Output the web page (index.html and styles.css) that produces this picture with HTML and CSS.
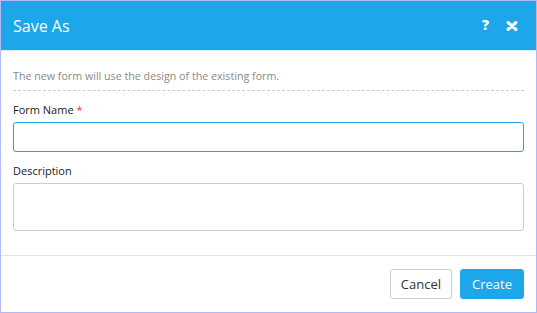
FILE: index.html
```html
<!DOCTYPE html>
<html lang="en">
<head>
  <meta charset="UTF-8" />
  <title>Save As</title>
  <link rel="stylesheet" href="styles.css">
</head>
<body>
  <div class="dialog">
    <header class="dlg-head">
      <h1>Save As</h1>
      <div class="dlg-tools">
        <span class="tool-help">?</span>
        <svg class="tool-close" width="12" height="10" viewBox="0 0 12 10">
          <path d="M2 1.5 L10 8.5 M10 1.5 L2 8.5" stroke="#fff" stroke-width="3" stroke-linecap="round"/>
        </svg>
      </div>
    </header>

    <section class="dlg-body">
      <p class="note">The new form will use the design of the existing form.</p>
      <div class="field">
        <label>Form Name <span class="req">*</span></label>
        <input type="text" class="inp inp-focus">
      </div>
      <div class="field">
        <label>Description</label>
        <textarea class="inp txt"></textarea>
      </div>
    </section>

    <footer class="dlg-foot">
      <button class="btn">Cancel</button>
      <button class="btn btn-primary">Create</button>
    </footer>
  </div>
</body>
</html>
```

FILE: styles.css
```css
:root{
  --blue:#1ea6ea;
  --text:#333333;
  --muted:#8a8a8a;
  --line:#cccccc;
}
*{box-sizing:border-box}
body{margin:0;font-family:'Open Sans',sans-serif;color:var(--text);background:#fff}
.dialog{width:537px;height:313px;border:1px solid #b1baf6;display:flex;flex-direction:column;background:#fff}
.dlg-head{height:50px;background:var(--blue);display:flex;align-items:center;justify-content:space-between;padding:0 12px 0 12px;border-bottom:1px solid #d6ecf9}
.dlg-head h1{margin:0;font-size:16px;font-weight:400;color:#fff}
.dlg-tools{display:flex;align-items:center;gap:17px;padding-right:6px}
.tool-help{color:#fff;font-weight:800;font-size:14px;line-height:1;margin-top:-2px}
.tool-close{display:block;margin-top:1px}
.dlg-body{padding:17px 12px 0 12px;flex:1}
.note{margin:0;padding-bottom:6px;font-size:10.7px;line-height:16px;color:var(--muted);border-bottom:1px dashed var(--line)}
.field{margin-top:11px;display:flex;flex-direction:column}
.field label{font-size:11px;line-height:15px;font-weight:500;color:#222;margin-bottom:5px}
.req{color:#e8412c}
.inp{display:block;width:100%;height:30px;border:1px solid var(--line);border-radius:3px;font-family:inherit;font-size:12px;padding:4px 8px;outline:none;background:#fff}
.inp-focus{border-color:var(--blue)}
.txt{height:48px;resize:none}
.dlg-foot{border-top:1px solid #e3e3e3;padding:13px 12px 13px 12px;display:flex;justify-content:flex-end;gap:8px}
.btn{height:30px;padding:0 10px;font-family:inherit;font-size:13px;color:var(--text);background:#fff;border:1px solid var(--line);border-radius:3px}
.btn-primary{background:var(--blue);border-color:var(--blue);color:#fff;padding:0 11px}
```
